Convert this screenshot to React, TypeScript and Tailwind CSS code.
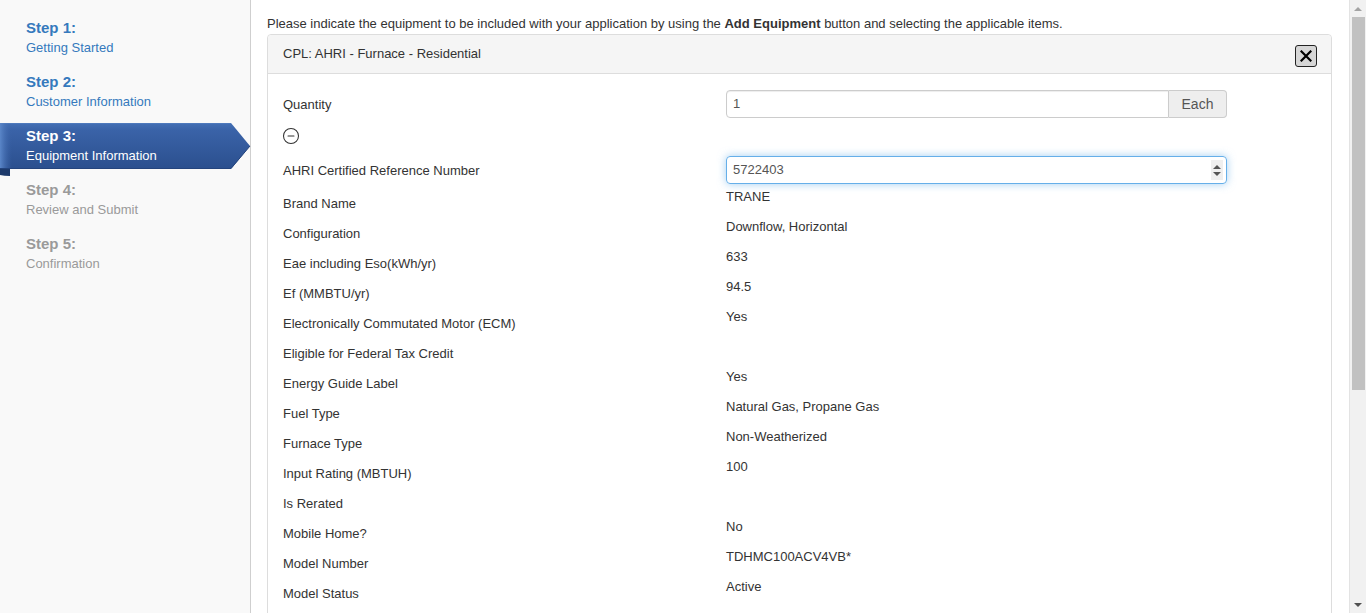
import { CircleMinus } from 'lucide-react';

const ROWS: [string, string][] = [
  ['Brand Name', 'TRANE'],
  ['Configuration', 'Downflow, Horizontal'],
  ['Eae including Eso(kWh/yr)', '633'],
  ['Ef (MMBTU/yr)', '94.5'],
  ['Electronically Commutated Motor (ECM)', 'Yes'],
  ['Eligible for Federal Tax Credit', ''],
  ['Energy Guide Label', 'Yes'],
  ['Fuel Type', 'Natural Gas, Propane Gas'],
  ['Furnace Type', 'Non-Weatherized'],
  ['Input Rating (MBTUH)', '100'],
  ['Is Rerated', ''],
  ['Mobile Home?', 'No'],
  ['Model Number', 'TDHMC100ACV4VB*'],
  ['Model Status', 'Active'],
];

const STEPS = [
  { n: 1, label: 'Getting Started', state: 'done' },
  { n: 2, label: 'Customer Information', state: 'done' },
  { n: 3, label: 'Equipment Information', state: 'active' },
  { n: 4, label: 'Review and Submit', state: 'todo' },
  { n: 5, label: 'Confirmation', state: 'todo' },
];

function Ribbon() {
  return (
    <svg className="absolute left-0 top-[-3px]" width="251" height="56" viewBox="0 0 251 56">
      <defs>
        <linearGradient id="rib" x1="0" y1="0" x2="0" y2="1">
          <stop offset="0" stopColor="#4470b5" />
          <stop offset="0.15" stopColor="#3a63a8" />
          <stop offset="1" stopColor="#2b4f8e" />
        </linearGradient>
        <linearGradient id="ribl" x1="0" y1="0" x2="1" y2="0">
          <stop offset="0" stopColor="#5a86c8" />
          <stop offset="1" stopColor="#3a63a8" stopOpacity="0" />
        </linearGradient>
      </defs>
      <path d="M0,52 Q4,53 10,53 L10,44 L0,44 Z" fill="#1d3a6b" />
      <path d="M0,0 L231,0 L250,23 L231,46 L0,46 Z" fill="url(#rib)" />
      <rect x="0" y="0" width="12" height="46" fill="url(#ribl)" />
      <path d="M0,0 L231,0" stroke="#5b84c4" strokeWidth="1" />
      <path d="M0,45.5 L231,45.5 L250,23" stroke="#24447d" strokeWidth="1" fill="none" />
    </svg>
  );
}

function Sidebar() {
  return (
    <div className="w-[251px] shrink-0 border-r border-[#cfcfcf] bg-[#f9f9f9] pt-[18px] font-['Liberation_Sans',Arial,sans-serif]">
      {STEPS.map((s) => (
        <div key={s.n} className="relative h-[54px] pl-[26px]">
          {s.state === 'active' && <Ribbon />}
          <div
            className={`relative text-[15px] font-bold leading-[20px] ${
              s.state === 'active' ? 'text-white' : s.state === 'done' ? 'text-[#3579bd]' : 'text-[#9a9a9a]'
            }`}
          >
            Step {s.n}:
          </div>
          <div
            className={`relative text-[13px] leading-[20px] ${
              s.state === 'active' ? 'text-white' : s.state === 'done' ? 'text-[#3579bd]' : 'text-[#9a9a9a]'
            }`}
          >
            {s.label}
          </div>
        </div>
      ))}
    </div>
  );
}

function Scrollbar() {
  return (
    <div className="w-[17px] shrink-0 border-l border-[#e3e3e3] bg-[#f1f1f1] flex flex-col items-center">
      <div className="h-[17px] flex items-center justify-center">
        <div className="w-0 h-0 border-x-[4px] border-x-transparent border-b-[4px] border-b-[#a3a3a3]" />
      </div>
      <div className="w-[13px] h-[373px] bg-[#c1c1c1]" />
      <div className="flex-1" />
      <div className="h-[17px] flex items-center justify-center">
        <div className="w-0 h-0 border-x-[4px] border-x-transparent border-t-[4px] border-t-[#505050]" />
      </div>
    </div>
  );
}

export default function App() {
  return (
    <div className="flex h-[613px] overflow-hidden bg-white text-[#333] font-['Liberation_Sans',Arial,sans-serif]">
      <Sidebar />
      <div className="flex-1 min-w-0 pl-[16px] pr-[17px] pt-[14px]">
        <p className="text-[13px] leading-[20px]">
          Please indicate the equipment to be included with your application by using the{' '}
          <b>Add Equipment</b> button and selecting the applicable items.
        </p>
        <div className="border border-[#dddddd] rounded-t-[4px] h-[700px]">
          <div className="h-[39px] bg-[#f5f5f5] border-b border-[#dddddd] rounded-t-[4px] flex items-center justify-between pl-[15px] pr-[14px]">
            <span className="text-[13px] leading-[20px] -mt-[1px]">CPL: AHRI - Furnace - Residential</span>
            <button className="w-[22px] h-[22px] mt-[3px] rounded-[3px] border border-[#222] bg-[#d6d6d6] flex items-center justify-center">
              <svg width="12" height="12" viewBox="0 0 12 12">
                <path d="M1.5,1.5 L10.5,10.5 M10.5,1.5 L1.5,10.5" stroke="#000" strokeWidth="2.2" strokeLinecap="square" />
              </svg>
            </button>
          </div>
          <div className="pt-[16px] px-[15px] text-[13px]">
            <div className="flex items-center h-[28px]">
              <div className="w-[443px] pt-[2px]">Quantity</div>
              <div className="w-[501px] flex h-[28px]">
                <div className="flex-1 border border-[#ccc] rounded-l-[4px] px-[6px] flex items-center text-[#555] shadow-[inset_0_1px_1px_rgba(0,0,0,0.075)]">
                  1
                </div>
                <div className="w-[58px] border border-l-0 border-[#ccc] rounded-r-[4px] bg-[#eeeeee] flex items-center justify-center text-[#555] text-[14px]">
                  Each
                </div>
              </div>
            </div>
            <div className="mt-[10px] h-[16px] flex items-center">
              <CircleMinus size={18} strokeWidth={1.4} className="text-[#333] -ml-px" />
            </div>
            <div className="mt-[12px] flex items-center h-[28px]">
              <div className="w-[443px] pt-[2px]">AHRI Certified Reference Number</div>
              <div className="w-[501px] h-[28px] border border-[#66afe9] rounded-[4px] shadow-[0_0_8px_rgba(102,175,233,0.6)] flex items-center pl-[6px] pr-[3px] text-[#555]">
                <span className="flex-1">5722403</span>
                <div className="w-[12px] h-[20px] bg-[#efefef] flex flex-col items-center justify-center gap-[3px]">
                  <div className="w-0 h-0 border-x-[4px] border-x-transparent border-b-[4px] border-b-[#555]" />
                  <div className="w-0 h-0 border-x-[4px] border-x-transparent border-t-[4px] border-t-[#555]" />
                </div>
              </div>
            </div>
            <div className="mt-[3px]">
              {ROWS.map(([label, value]) => (
                <div key={label} className="flex h-[30px]">
                  <div className="w-[443px] pt-[7px] leading-[20px]">{label}</div>
                  <div className="leading-[20px]">{value}</div>
                </div>
              ))}
            </div>
          </div>
        </div>
      </div>
      <Scrollbar />
    </div>
  );
}
